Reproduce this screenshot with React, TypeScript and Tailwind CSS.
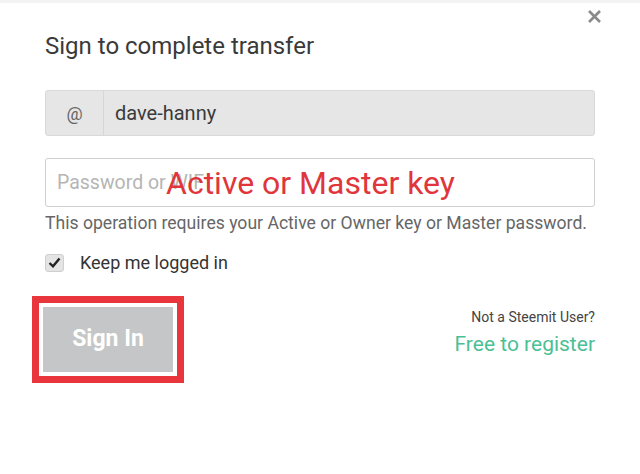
import React from "react";

export default function App() {
  return (
    <div
      className="relative w-[640px] h-[474px] bg-white overflow-hidden text-[#333]"
      style={{ fontFamily: "Roboto, 'Noto Sans', sans-serif" }}
    >
      <div className="h-[3px] bg-[#f3f3f3]" />
      {/* close button */}
      <button className="absolute right-[38px] top-[8px] w-[16px] h-[16px] flex items-center justify-center">
        <svg width="15" height="15" viewBox="0 0 15 15">
          <path d="M2 2 L13 13 M13 2 L2 13" stroke="#8a8a8a" strokeWidth="2.6" strokeLinecap="butt" />
        </svg>
      </button>

      <div className="px-[45px] pt-[27px]">
        <h1 className="text-[24px] leading-[32px] text-[#3a3a3a]">Sign to complete transfer</h1>

        {/* username */}
        <div className="mt-[28px] flex h-[46px] w-[550px] rounded-[3px] border border-[#d9d9d9] bg-[#e6e6e6]">
          <div className="w-[58px] flex items-center justify-center border-r border-[#d6d6d6] text-[18px] text-[#666]">
            @
          </div>
          <div className="flex items-center pl-[11px] text-[20px] text-[#3a3a3a]">dave-hanny</div>
        </div>

        {/* password */}
        <div className="relative mt-[22px] flex h-[49px] w-[550px] items-center rounded-[3px] border border-[#cfcfcf] bg-white pl-[11px]">
          <span className="text-[19.5px] text-[#b5b5b5]">Password or WIF</span>
          <span className="absolute left-[120px] top-[6px] bg-transparent text-[32px] leading-[36px] text-[#e0363b]">
            Active or Master key
          </span>
        </div>
        <p className="mt-[5px] text-[17.6px] leading-[22px] text-[#666] whitespace-nowrap">
          This operation requires your Active or Owner key or Master password.
        </p>

        {/* remember */}
        <label className="mt-[15px] flex items-center">
          <span className="flex h-[18px] w-[19px] items-center justify-center rounded-[3px] border border-[#cfcfcf] bg-[#e4e4e4]">
            <svg width="13" height="11" viewBox="0 0 13 11">
              <path d="M1.5 6 L5 9.3 L11.5 1.5" fill="none" stroke="#222" strokeWidth="2.4" />
            </svg>
          </span>
          <span className="ml-[16px] text-[18px] text-[#333]">Keep me logged in</span>
        </label>

        {/* actions */}
        <div className="mt-[20px] flex items-start justify-between">
          <div className="-ml-[13px] border-[7px] border-[#e8363c] p-[4px]">
            <button className="flex h-[65px] w-[130px] items-center justify-center bg-[#c5c6c7] text-[23px] font-bold text-white">
              Sign In
            </button>
          </div>
          <div className="mt-[11px] flex flex-col items-end">
            <span className="text-[14px] leading-[20px] text-[#444]">Not a Steemit User?</span>
            <span className="mt-[4px] text-[21px] leading-[26px] text-[#4bbf95]">Free to register</span>
          </div>
        </div>
      </div>
    </div>
  );
}
